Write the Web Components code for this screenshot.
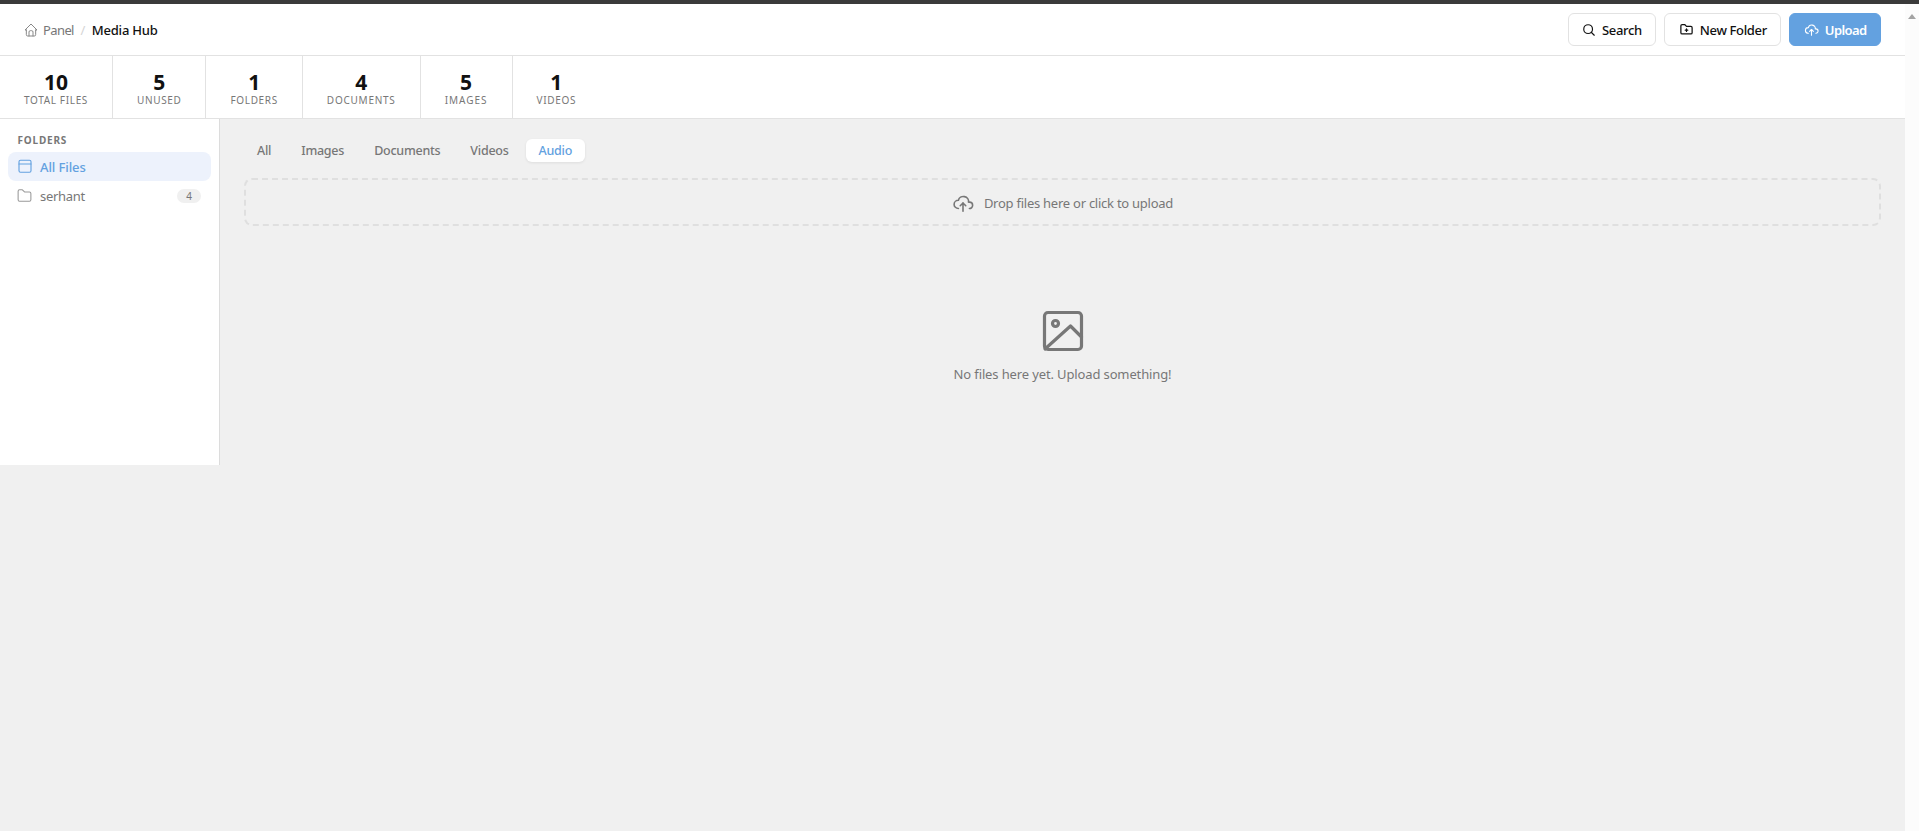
<!DOCTYPE html>
<html>
<head>
<meta charset="utf-8">
<title>Media Hub</title>
<style>
	html, body { margin: 0; height: 100%; }
	body { font-family: "Noto Sans", "Open Sans", sans-serif; background: #f0f0f0; color: #777; overflow: hidden; }
</style>
</head>
<body>
<media-hub></media-hub>
<script>
//	shared icon strokes
const icon = (body, size = 16, sw = 2) => `<svg width="${size}" height="${size}" viewBox="0 0 24 24" fill="none" stroke="currentColor" stroke-width="${sw}" stroke-linecap="round" stroke-linejoin="round">${body}</svg>`;
const CLOUD = '<path d="M7 18a4.6 4.4 0 0 1 0-9a5 4.5 0 0 1 11 2h1a3.5 3.5 0 0 1 0 7"/><path d="M9 15l3-3l3 3"/><path d="M12 12v9"/>';

customElements.define('hub-button', class extends HTMLElement {
	constructor() {
		super();
		this.attachShadow({ mode: 'open' }).innerHTML = `
			<style>
				:host {
					display: inline-flex;
					align-items: center;
					gap: 6px;
					box-sizing: border-box;
					height: 33px;
					padding: 0 13.5px;
					background: #fff;
					border: 1px solid #e2e2e2;
					border-radius: 6px;
					color: #111;
					font-size: 13px;
					font-weight: 500;
					letter-spacing: -.35px;
				}
				:host([primary]) {
					background: #63a1e0;
					border-color: #63a1e0;
					color: #fff;
					font-weight: 600;
					letter-spacing: -.6px;
				}
				::slotted(svg) { display: block; flex: none; }
			</style>
			<slot name="icon"></slot><slot></slot>`;
	}
});

customElements.define('hub-header', class extends HTMLElement {
	constructor() {
		super();
		this.attachShadow({ mode: 'open' }).innerHTML = `
			<style>
				:host {
					display: flex;
					align-items: center;
					justify-content: space-between;
					box-sizing: border-box;
					height: 52px;
					padding: 0 24px;
					background: #fff;
					border-bottom: 1px solid #e2e2e2;
				}
				.crumbs { display: flex; align-items: center; font-size: 13px; color: #777; }
				.crumbs svg { display: block; margin: 0 4px 0 -1px; color: #888; }
				.panel { letter-spacing: -.6px; }
				.sep { margin: 0 6.5px; color: #d5d5d5; }
				.now { color: #111; font-weight: 500; letter-spacing: -.2px; }
				.actions { display: flex; gap: 8px; }
			</style>
			<div class="crumbs">
				${icon('<path d="M5 12H3l9-9l9 9h-2"/><path d="M5 12v7a2 2 0 0 0 2 2h10a2 2 0 0 0 2-2v-7"/><path d="M9 21v-6a2 2 0 0 1 2-2h2a2 2 0 0 1 2 2v6"/>', 16, 1.5)}
				<span class="panel">Panel</span><span class="sep">/</span><span class="now">Media Hub</span>
			</div>
			<div class="actions">
				<hub-button><span slot="icon" style="display:contents">${icon('<circle cx="10.5" cy="10.5" r="7.5"/><path d="M21 21l-5.2-5.2"/>', 14)}</span>Search</hub-button>
				<hub-button><span slot="icon" style="display:contents">${icon('<path d="M5 4h4l3 3h7a2 2 0 0 1 2 2v8a2 2 0 0 1-2 2H5a2 2 0 0 1-2-2V6a2 2 0 0 1 2-2"/><path d="M12 11v4M10 13h4"/>', 15)}</span>New Folder</hub-button>
				<hub-button primary><span slot="icon" style="display:contents">${icon(CLOUD, 15, 1.75)}</span>Upload</hub-button>
			</div>`;
	}
});

customElements.define('hub-stat', class extends HTMLElement {
	constructor() {
		super();
		this.attachShadow({ mode: 'open' }).innerHTML = `
			<style>
				:host {
					display: flex;
					flex-direction: column;
					align-items: center;
					box-sizing: border-box;
					padding: 14px 24px 0;
					border-right: 1px solid #e2e2e2;
				}
				:host(:last-child) { border-right: 0; }
				.n { font-size: 21px; font-weight: 700; line-height: 24px; color: #111; }
				.l { font-size: 10px; line-height: 12px; letter-spacing: var(--ls, .65px); color: #777; text-transform: uppercase; white-space: nowrap; }
			</style>
			<div class="n">${this.getAttribute('value')}</div>
			<div class="l"><slot></slot></div>`;
	}
});

customElements.define('hub-stats', class extends HTMLElement {
	constructor() {
		super();
		this.attachShadow({ mode: 'open' }).innerHTML = `
			<style>
				:host {
					display: flex;
					box-sizing: border-box;
					height: 63px;
					background: #fff;
					border-bottom: 1px solid #e2e2e2;
				}
			</style>
			<slot></slot>`;
	}
});

customElements.define('hub-folder', class extends HTMLElement {
	constructor() {
		super();
		const count = this.getAttribute('count');
		this.attachShadow({ mode: 'open' }).innerHTML = `
			<style>
				:host {
					display: flex;
					align-items: center;
					box-sizing: border-box;
					height: 29px;
					padding: 0 10px 0 8px;
					border-radius: 8px;
					color: #777;
					font-size: 13px;
					letter-spacing: -.3px;
				}
				:host([active]) { background: #edf2fc; color: #63a1e0; font-weight: 500; letter-spacing: -.1px; }
				svg { display: block; margin-right: 6px; flex: none; }
				svg.closed { width: 17px; height: 17px; margin-right: 7px; color: #999; }
				.name { flex: 1; }
				.count {
					padding: 0 9px;
					height: 14px;
					line-height: 14px;
					border-radius: 7px;
					background: #f0f0f0;
					font-size: 10px;
					letter-spacing: 0;
					color: #777;
				}
			</style>
			${this.hasAttribute('active')
				? icon('<rect x="4" y="3" width="16" height="16" rx="2"/><path d="M4 8h16"/>', 18, 1.5)
				: icon('<path d="M5 4h4l3 3h7a2 2 0 0 1 2 2v9a2 2 0 0 1-2 2H5a2 2 0 0 1-2-2V6a2 2 0 0 1 2-2"/>', 18, 1.5).replace('<svg', '<svg class="closed"')}
			<span class="name"><slot></slot></span>
			${count ? `<span class="count">${count}</span>` : ''}`;
	}
});

customElements.define('hub-sidebar', class extends HTMLElement {
	constructor() {
		super();
		this.attachShadow({ mode: 'open' }).innerHTML = `
			<style>
				:host {
					display: block;
					flex: none;
					box-sizing: border-box;
					width: 220px;
					height: 346px;
					padding: 15px 8px 0;
					background: #fff;
					border-right: 1px solid #dcdcdc;
				}
				h3 {
					margin: 0 0 6px 9.5px;
					font-size: 10px;
					line-height: 12px;
					font-weight: 700;
					letter-spacing: .8px;
					color: #777;
				}
			</style>
			<h3>FOLDERS</h3>
			<slot></slot>`;
	}
});

customElements.define('hub-tab', class extends HTMLElement {
	constructor() {
		super();
		this.attachShadow({ mode: 'open' }).innerHTML = `
			<style>
				:host {
					display: flex;
					align-items: center;
					box-sizing: border-box;
					height: 23px;
					padding: 0 13px 1px;
					border-radius: 6px;
					color: #777;
					font-size: 12.5px;
					font-weight: 500;
					letter-spacing: -.25px;
				}
				:host([active]) { background: #fff; color: #63a1e0; box-shadow: 0 1px 3px rgba(0,0,0,.08); }
			</style>
			<slot></slot>`;
	}
});

customElements.define('hub-dropzone', class extends HTMLElement {
	constructor() {
		super();
		this.attachShadow({ mode: 'open' }).innerHTML = `
			<style>
				:host {
					display: flex;
					align-items: center;
					justify-content: center;
					gap: 10px;
					box-sizing: border-box;
					height: 48px;
					padding-top: 1px;
					border: 2px dashed #dfdfdf;
					border-radius: 8px;
					color: #777;
					font-size: 13px;
					letter-spacing: -.25px;
				}
				svg { display: block; }
			</style>
			${icon(CLOUD, 22, 1.75)}
			<slot></slot>`;
	}
});

customElements.define('hub-empty', class extends HTMLElement {
	constructor() {
		super();
		this.attachShadow({ mode: 'open' }).innerHTML = `
			<style>
				:host {
					display: flex;
					flex-direction: column;
					align-items: center;
					padding-top: 84px;
					color: #777;
					font-size: 13px;
					letter-spacing: -.13px;
				}
				svg { display: block; margin-bottom: 13px; }
			</style>
			<svg width="42" height="42" viewBox="0 0 42 42" fill="none" stroke="currentColor" stroke-width="3.2" stroke-linecap="round" stroke-linejoin="round">
				<rect x="2.5" y="2.5" width="37" height="37" rx="3.5"/>
				<circle cx="13.5" cy="13.5" r="3"/>
				<path d="M3 39L28.5 16L39.5 27"/>
			</svg>
			<slot></slot>`;
	}
});

customElements.define('hub-scrollbar', class extends HTMLElement {
	constructor() {
		super();
		this.attachShadow({ mode: 'open' }).innerHTML = `
			<style>
				:host { display: block; flex: none; width: 14px; background: #fcfcfc; }
				i {
					display: block;
					width: 0;
					margin: 10px auto 0;
					border: 4.5px solid transparent;
					border-top: 0;
					border-bottom: 5px solid #a3a3a3;
				}
			</style>
			<i></i>`;
	}
});

customElements.define('media-hub', class extends HTMLElement {
	constructor() {
		super();
		this.attachShadow({ mode: 'open' }).innerHTML = `
			<style>
				:host {
					display: flex;
					flex-direction: column;
					height: 831px;
					box-sizing: border-box;
					border-top: 4px solid #3a3a3a;
				}
				.window { flex: 1; display: flex; min-height: 0; }
				.page { flex: 1; min-width: 0; }
				.body { display: flex; }
				main { flex: 1; min-width: 0; padding: 20px 24px 0; }
				.tabs { display: flex; gap: 4px; margin-bottom: 16px; }
			</style>
			<div class="window">
				<div class="page">
					<hub-header></hub-header>
					<hub-stats>
						<hub-stat value="10">Total Files</hub-stat>
						<hub-stat value="5">Unused</hub-stat>
						<hub-stat value="1">Folders</hub-stat>
						<hub-stat value="4" style="--ls:.75px">Documents</hub-stat>
						<hub-stat value="5" style="--ls:1px">Images</hub-stat>
						<hub-stat value="1">Videos</hub-stat>
					</hub-stats>
					<div class="body">
						<hub-sidebar>
							<hub-folder active>All Files</hub-folder>
							<hub-folder count="4">serhant</hub-folder>
						</hub-sidebar>
						<main>
							<div class="tabs">
								<hub-tab>All</hub-tab>
								<hub-tab>Images</hub-tab>
								<hub-tab>Documents</hub-tab>
								<hub-tab>Videos</hub-tab>
								<hub-tab active>Audio</hub-tab>
							</div>
							<hub-dropzone>Drop files here or click to upload</hub-dropzone>
							<hub-empty>No files here yet. Upload something!</hub-empty>
						</main>
					</div>
				</div>
				<hub-scrollbar></hub-scrollbar>
			</div>`;
	}
});
</script>
</body>
</html>
